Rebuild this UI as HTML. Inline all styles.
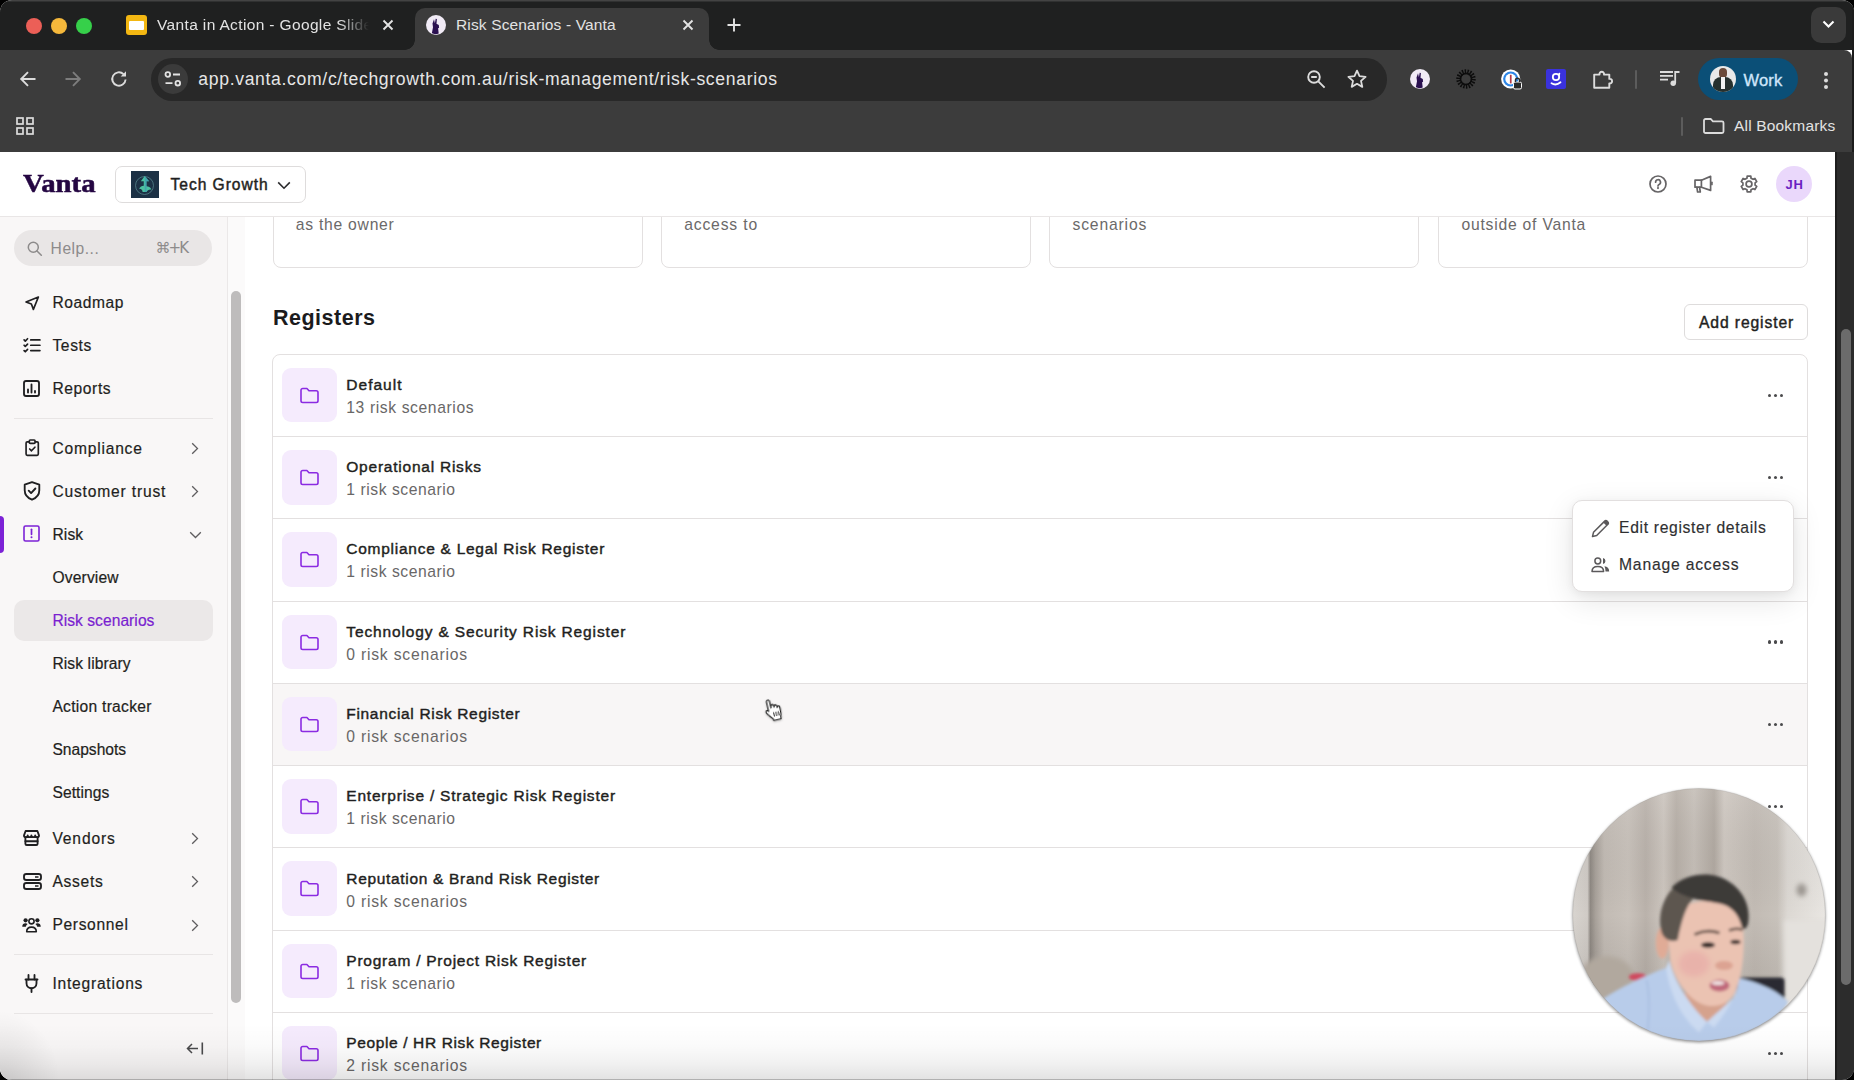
<!DOCTYPE html>
<html lang="en">
<head>
<meta charset="utf-8">
<title>Risk Scenarios - Vanta</title>
<style>
*{box-sizing:border-box;margin:0;padding:0}
html,body{width:1854px;height:1080px;overflow:hidden;background:#000}
body{font-family:"Liberation Sans",sans-serif;position:relative;color:#1c1c1e}
.abs{position:absolute}
.t{position:absolute;white-space:nowrap;line-height:1}
svg{position:absolute;overflow:visible}
/* ---------- browser chrome ---------- */
#win{position:absolute;left:0;top:0;width:1854px;height:1080px;border-radius:12px 12px 12px 12px;overflow:hidden;background:#fff}
#tabstrip{position:absolute;left:0;top:0;width:1854px;height:50px;background:#1f2020;box-shadow:inset 0 1.500px 0 rgba(255,255,255,.16)}
#toolbar{position:absolute;left:0;top:50px;width:1852px;height:102px;background:#3c3c3c;border-top-right-radius:8px}
#redge{position:absolute;left:1852px;top:0;width:2px;height:1080px;background:#1c1c1c}
#acttab{position:absolute;left:415px;top:8px;width:294px;height:42px;background:#3c3c3c;border-radius:10px 10px 0 0}
#acttab:before,#acttab:after{content:"";position:absolute;bottom:0;width:10px;height:10px}
#acttab:before{left:-10px;background:radial-gradient(circle at 0 0,rgba(0,0,0,0) 9.5px,#3c3c3c 10px)}
#acttab:after{right:-10px;background:radial-gradient(circle at 100% 0,rgba(0,0,0,0) 9.5px,#3c3c3c 10px)}
.tl{position:absolute;top:18px;width:16px;height:16px;border-radius:50%}
.tabtxt{font-size:15.5px;color:#e3e3e3;top:17px;letter-spacing:.15px}
#omni{position:absolute;left:151px;top:58px;width:1236px;height:42.500px;border-radius:21.250px;background:#282828}
#url{left:198.300px;top:70.500px;font-size:17.600px;color:#e6e6e6;letter-spacing:.665px}
/* ---------- page ---------- */
#page{position:absolute;left:0;top:152px;width:1835px;height:928px;background:#fff;overflow:hidden}
#vscroll{position:absolute;left:1835px;top:152px;width:19px;height:928px;background:#2c2c2c;border-left:2px solid #1d1d1d}
#vthumb{position:absolute;left:4px;top:177px;width:10px;height:656px;border-radius:5px;background:#6b6b6b}
</style>
</head>
<body>
<div id="win">
<!-- CHROME -->
<div id="tabstrip">
  <div class="tl" style="left:26px;background:#ec5f57"></div>
  <div class="tl" style="left:51px;background:#f5b83b"></div>
  <div class="tl" style="left:76px;background:#36d04a"></div>
  <div id="acttab"></div>
</div>
<div id="redge"></div>
<div id="toolbar"></div>
<div id="omni"></div>
<div class="t tabtxt" style="left:157px;width:212px;overflow:hidden;letter-spacing:.36px;-webkit-mask-image:linear-gradient(90deg,#000 86%,rgba(0,0,0,0) 100%);mask-image:linear-gradient(90deg,#000 86%,rgba(0,0,0,0) 100%)">Vanta in Action - Google Slides</div>
<div class="t tabtxt" style="left:456px">Risk Scenarios - Vanta</div>
<div class="t" id="url">app.vanta.com/c/techgrowth.com.au/risk-management/risk-scenarios</div>

<!-- slides favicon -->
<div class="abs" style="left:126px;top:15px;width:21px;height:20px;border-radius:3px;background:#f3b712"></div>
<div class="abs" style="left:129px;top:21px;width:15px;height:9px;border-radius:1px;background:#fff"></div>
<!-- tab close x -->
<svg style="left:381px;top:18px" width="14" height="14" viewBox="0 0 14 14"><path d="M2.5 2.5l9 9M11.5 2.5l-9 9" stroke="#e3e3e3" stroke-width="1.9" fill="none"/></svg>
<svg style="left:681px;top:18px" width="14" height="14" viewBox="0 0 14 14"><path d="M2.5 2.5l9 9M11.5 2.5l-9 9" stroke="#e3e3e3" stroke-width="1.9" fill="none"/></svg>
<!-- vanta favicon -->
<div class="abs" style="left:426px;top:15px;width:20px;height:20px;border-radius:50%;background:#f1ebf6"></div>
<svg style="left:426px;top:15px" width="20" height="20" viewBox="0 0 20 20"><path d="M8 4.2l.9 4 .8-4.4 1.2.3-.4 4.6 2.3 1.4.3 2.6-1 .6.6 5.2c-2.300 1.1-5.400 .7-6.800-.5l1.100-5.800-.5-3.600z" fill="#2a1050"/></svg>
<!-- new tab + -->
<svg style="left:726px;top:17px" width="16" height="16" viewBox="0 0 16 16"><path d="M8 1.500v13M1.500 8h13" stroke="#e3e3e3" stroke-width="1.900" fill="none"/></svg>
<!-- tab search -->
<div class="abs" style="left:1811px;top:7px;width:35px;height:36px;border-radius:10px;background:#3a3a3a"></div>
<svg style="left:1821px;top:19px" width="15" height="11" viewBox="0 0 15 11"><path d="M2.500 2.500l5 5 5-5" stroke="#fff" stroke-width="2.100" fill="none"/></svg>
<!-- back / fwd / reload -->
<svg style="left:19px;top:70px" width="18" height="18" viewBox="0 0 18 18"><path d="M16.500 9H3M9 2.200L2.200 9 9 15.800" stroke="#dcdcdc" stroke-width="1.900" fill="none" stroke-linejoin="miter"/></svg>
<svg style="left:64px;top:70px" width="18" height="18" viewBox="0 0 18 18"><path d="M1.500 9H15M9 2.200L15.800 9 9 15.800" stroke="#7d7d7d" stroke-width="1.900" fill="none"/></svg>
<svg style="left:109px;top:69px" width="20" height="20" viewBox="0 0 20 20"><path d="M16.600 10.500a6.700 6.700 0 1 1-2.100-5.400" stroke="#dcdcdc" stroke-width="1.900" fill="none"/><path d="M17 2.300v5.300h-5.300z" fill="#dcdcdc"/></svg>
<!-- site settings -->
<div class="abs" style="left:158px;top:64px;width:30px;height:30px;border-radius:50%;background:#3b3b3b"></div>
<svg style="left:163px;top:70px" width="20" height="18" viewBox="0 0 20 18"><g stroke="#e3e3e3" stroke-width="1.800" fill="none"><circle cx="4.800" cy="4.500" r="2.300"/><path d="M10 4.500h7"/><circle cx="14.800" cy="13.200" r="2.300"/><path d="M2.500 13.200h7"/></g></svg>
<!-- zoom + star -->
<svg style="left:1306px;top:69px" width="21" height="21" viewBox="0 0 21 21"><g stroke="#dcdcdc" stroke-width="1.900" fill="none"><circle cx="8" cy="8" r="5.800"/><path d="M12.300 12.300l6.300 6.300M5.200 8h5.600"/></g></svg>
<svg style="left:1346px;top:68px" width="22" height="22" viewBox="0 0 22 22"><path d="M11 2.600l2.500 5.600 6.100.6-4.600 4.100 1.300 6-5.300-3.100-5.300 3.100 1.300-6-4.600-4.100 6.100-.6z" stroke="#dcdcdc" stroke-width="1.800" fill="none" stroke-linejoin="round"/></svg>
<!-- extension icons -->
<div class="abs" style="left:1410px;top:69px;width:20px;height:20px;border-radius:50%;background:#f1ebf6"></div>
<svg style="left:1410px;top:69px" width="20" height="20" viewBox="0 0 20 20"><path d="M8 4.200l.9 4 .8-4.400 1.200.3-.4 4.600 2.300 1.400.3 2.600-1 .6.600 5.200c-2.300 1.100-5.400 .7-6.800-.5l1.100-5.800-.5-3.600z" fill="#2a1050"/></svg>
<svg style="left:1456px;top:69px" width="20" height="20" viewBox="0 0 20 20"><circle cx="10" cy="10" r="7.200" fill="none" stroke="#0c0c0c" stroke-width="5" stroke-dasharray="1.300 1.200"/><circle cx="10" cy="10" r="5.600" fill="none" stroke="#0c0c0c" stroke-width="1.600"/></svg>
<svg style="left:1500px;top:68px" width="24" height="24" viewBox="0 0 24 24"><circle cx="10.700" cy="11" r="9.600" fill="#fff"/><circle cx="10.700" cy="11" r="7.600" fill="#2e86e6"/><circle cx="10.700" cy="11" r="5.400" fill="#fff"/><rect x="9.900" y="6.800" width="1.700" height="8.600" fill="#b33a4a"/><rect x="13.500" y="14" width="8" height="7" rx="1.500" fill="#2b2b2b" stroke="#fff" stroke-width="1"/><path d="M15.500 14v-1.800a2 2 0 0 1 4 0V14" fill="none" stroke="#2b2b2b" stroke-width="1.500"/></svg>
<div class="abs" style="left:1546px;top:69px;width:20px;height:20px;border-radius:2px;background:#3a32dc"></div>
<svg style="left:1546px;top:69px" width="20" height="20" viewBox="0 0 20 20"><circle cx="10" cy="8" r="3.200" fill="none" stroke="#fff" stroke-width="1.800"/><path d="M13.400 4.600l-.6 1.600M5.500 14.300c2.800 1.700 6.400 1.200 9-1" stroke="#fff" stroke-width="1.800" fill="none" stroke-linecap="round"/></svg>
<!-- puzzle -->
<svg style="left:1592px;top:68px" width="22" height="22" viewBox="0 0 22 22"><path d="M2.200 6.600h5.300a2.300 2.300 0 1 1 4.500 0h5.300v4.300a2.300 2.300 0 1 1 0 4.500V19.800H2.200z" stroke="#dcdcdc" stroke-width="1.900" fill="none" stroke-linejoin="round"/></svg>
<div class="abs" style="left:1635px;top:70px;width:2px;height:19px;background:#5c5c5c;border-radius:1px"></div>
<!-- media -->
<svg style="left:1660px;top:70px" width="20" height="17" viewBox="0 0 20 17"><g stroke="#dcdcdc" stroke-width="1.800" fill="none"><path d="M0 2h13M0 5.800h13M0 9.600h8"/><path d="M15.200 13V2h4.300"/></g><circle cx="13.200" cy="13.200" r="2.700" fill="#dcdcdc"/></svg>
<!-- profile pill -->
<div class="abs" style="left:1698px;top:58px;width:100px;height:42px;border-radius:21px;background:#0b4f77"></div>
<div class="abs" style="left:1710px;top:66px;width:26px;height:26px;border-radius:50%;background:#e9e9e9;overflow:hidden"><div class="abs" style="left:9px;top:2px;width:8px;height:10px;border-radius:4px;background:#6b4a3a"></div><div class="abs" style="left:3px;top:11px;width:20px;height:18px;border-radius:8px 8px 0 0;background:#26302e"></div><div class="abs" style="left:11px;top:11px;width:4px;height:12px;background:#f2f2f2"></div></div>
<div class="t" style="left:1743.500px;top:71.600px;font-size:16.500px;color:#cfe6fb;font-weight:400;letter-spacing:.15px;-webkit-text-stroke:.35px #cfe6fb">Work</div>
<div class="abs" style="left:1824px;top:72px;width:4px;height:4px;border-radius:50%;background:#dcdcdc;box-shadow:0 6.500px 0 #dcdcdc,0 13px 0 #dcdcdc"></div>
<!-- bookmarks bar -->
<svg style="left:16px;top:117px" width="18" height="18" viewBox="0 0 18 18"><g stroke="#dcdcdc" stroke-width="1.700" fill="none"><rect x="1" y="1" width="6" height="6"/><rect x="11" y="1" width="6" height="6"/><rect x="1" y="11" width="6" height="6"/><rect x="11" y="11" width="6" height="6"/></g></svg>
<div class="abs" style="left:1681px;top:117px;width:2px;height:19px;background:#5c5c5c;border-radius:1px"></div>
<svg style="left:1703px;top:118px" width="22" height="16" viewBox="0 0 22 16"><path d="M1 2.500a1.500 1.500 0 0 1 1.500-1.500h5.200l2.200 2.300h9.100a1.500 1.500 0 0 1 1.500 1.500v8.700a1.500 1.500 0 0 1-1.500 1.500h-16.500a1.500 1.500 0 0 1-1.500-1.500z" stroke="#dcdcdc" stroke-width="1.800" fill="none"/></svg>
<div class="t" style="left:1734px;top:118px;font-size:15.500px;color:#e3e3e3;letter-spacing:.18px">All Bookmarks</div>

<div id="page">
<!-- MAIN -->
<div class="abs" style="left:272.5px;top:30px;width:370.0px;height:85.8px;border:1px solid #e3e0e0;border-radius:8px;background:#fff"></div>
<div class="abs" style="left:661px;top:30px;width:370.0px;height:85.8px;border:1px solid #e3e0e0;border-radius:8px;background:#fff"></div>
<div class="abs" style="left:1049.3px;top:30px;width:370.0px;height:85.8px;border:1px solid #e3e0e0;border-radius:8px;background:#fff"></div>
<div class="abs" style="left:1437.8px;top:30px;width:370.2px;height:85.8px;border:1px solid #e3e0e0;border-radius:8px;background:#fff"></div>
<div class="abs" style="left:1684px;top:152px;width:124px;height:36px;border:1px solid #dedcdc;border-radius:6px;background:#fff"></div>
<div class="abs" style="left:272px;top:201.73px;width:1536px;height:760px;border:1px solid #e3e0e0;border-radius:8px 8px 0 0;background:#fff"></div>
<div class="abs" style="left:273px;top:531.81px;width:1534px;height:81.27px;background:#f8f6f6"></div>
<div class="abs" style="left:281.500px;top:215.73px;width:55px;height:54.500px;border-radius:9px;background:#f5ebfd"></div>
<svg style="left:299.500px;top:234.73px" width="19" height="17" viewBox="0 0 19 17"><path d="M1 3.200A1.700 1.700 0 0 1 2.700 1.500h4.200l2.100 2.300h7.300A1.700 1.700 0 0 1 18 5.500v8.300a1.700 1.700 0 0 1-1.700 1.700H2.700A1.700 1.700 0 0 1 1 13.800z" stroke="#8b2be2" stroke-width="1.600" fill="none" stroke-linejoin="round"/></svg>
<div class="abs" style="left:1768px;top:241.53px;width:3.400px;height:3.400px;border-radius:50%;background:#4a4a4c;box-shadow:6px 0 0 #4a4a4c,12px 0 0 #4a4a4c"></div>
<div class="abs" style="left:273px;top:284.00px;width:1534px;height:1px;background:#e3e0e0"></div>
<div class="abs" style="left:281.500px;top:298.00px;width:55px;height:54.500px;border-radius:9px;background:#f5ebfd"></div>
<svg style="left:299.500px;top:317.00px" width="19" height="17" viewBox="0 0 19 17"><path d="M1 3.200A1.700 1.700 0 0 1 2.700 1.500h4.200l2.100 2.300h7.300A1.700 1.700 0 0 1 18 5.500v8.300a1.700 1.700 0 0 1-1.700 1.700H2.700A1.700 1.700 0 0 1 1 13.800z" stroke="#8b2be2" stroke-width="1.600" fill="none" stroke-linejoin="round"/></svg>
<div class="abs" style="left:1768px;top:323.80px;width:3.400px;height:3.400px;border-radius:50%;background:#4a4a4c;box-shadow:6px 0 0 #4a4a4c,12px 0 0 #4a4a4c"></div>
<div class="abs" style="left:273px;top:366.27px;width:1534px;height:1px;background:#e3e0e0"></div>
<div class="abs" style="left:281.500px;top:380.27px;width:55px;height:54.500px;border-radius:9px;background:#f5ebfd"></div>
<svg style="left:299.500px;top:399.27px" width="19" height="17" viewBox="0 0 19 17"><path d="M1 3.200A1.700 1.700 0 0 1 2.700 1.500h4.200l2.100 2.300h7.300A1.700 1.700 0 0 1 18 5.500v8.300a1.700 1.700 0 0 1-1.700 1.700H2.700A1.700 1.700 0 0 1 1 13.800z" stroke="#8b2be2" stroke-width="1.600" fill="none" stroke-linejoin="round"/></svg>
<div class="abs" style="left:1768px;top:406.07px;width:3.400px;height:3.400px;border-radius:50%;background:#4a4a4c;box-shadow:6px 0 0 #4a4a4c,12px 0 0 #4a4a4c"></div>
<div class="abs" style="left:273px;top:448.54px;width:1534px;height:1px;background:#e3e0e0"></div>
<div class="abs" style="left:281.500px;top:462.54px;width:55px;height:54.500px;border-radius:9px;background:#f5ebfd"></div>
<svg style="left:299.500px;top:481.54px" width="19" height="17" viewBox="0 0 19 17"><path d="M1 3.200A1.700 1.700 0 0 1 2.700 1.500h4.200l2.100 2.300h7.300A1.700 1.700 0 0 1 18 5.500v8.300a1.700 1.700 0 0 1-1.700 1.700H2.700A1.700 1.700 0 0 1 1 13.800z" stroke="#8b2be2" stroke-width="1.600" fill="none" stroke-linejoin="round"/></svg>
<div class="abs" style="left:1768px;top:488.34px;width:3.400px;height:3.400px;border-radius:50%;background:#4a4a4c;box-shadow:6px 0 0 #4a4a4c,12px 0 0 #4a4a4c"></div>
<div class="abs" style="left:273px;top:530.81px;width:1534px;height:1px;background:#e3e0e0"></div>
<div class="abs" style="left:281.500px;top:544.81px;width:55px;height:54.500px;border-radius:9px;background:#f5ebfd"></div>
<svg style="left:299.500px;top:563.81px" width="19" height="17" viewBox="0 0 19 17"><path d="M1 3.200A1.700 1.700 0 0 1 2.700 1.500h4.200l2.100 2.300h7.300A1.700 1.700 0 0 1 18 5.500v8.300a1.700 1.700 0 0 1-1.700 1.700H2.700A1.700 1.700 0 0 1 1 13.800z" stroke="#8b2be2" stroke-width="1.600" fill="none" stroke-linejoin="round"/></svg>
<div class="abs" style="left:1768px;top:570.61px;width:3.400px;height:3.400px;border-radius:50%;background:#4a4a4c;box-shadow:6px 0 0 #4a4a4c,12px 0 0 #4a4a4c"></div>
<div class="abs" style="left:273px;top:613.08px;width:1534px;height:1px;background:#e3e0e0"></div>
<div class="abs" style="left:281.500px;top:627.08px;width:55px;height:54.500px;border-radius:9px;background:#f5ebfd"></div>
<svg style="left:299.500px;top:646.08px" width="19" height="17" viewBox="0 0 19 17"><path d="M1 3.200A1.700 1.700 0 0 1 2.700 1.500h4.200l2.100 2.300h7.300A1.700 1.700 0 0 1 18 5.500v8.300a1.700 1.700 0 0 1-1.700 1.700H2.700A1.700 1.700 0 0 1 1 13.800z" stroke="#8b2be2" stroke-width="1.600" fill="none" stroke-linejoin="round"/></svg>
<div class="abs" style="left:1768px;top:652.88px;width:3.400px;height:3.400px;border-radius:50%;background:#4a4a4c;box-shadow:6px 0 0 #4a4a4c,12px 0 0 #4a4a4c"></div>
<div class="abs" style="left:273px;top:695.35px;width:1534px;height:1px;background:#e3e0e0"></div>
<div class="abs" style="left:281.500px;top:709.35px;width:55px;height:54.500px;border-radius:9px;background:#f5ebfd"></div>
<svg style="left:299.500px;top:728.35px" width="19" height="17" viewBox="0 0 19 17"><path d="M1 3.200A1.700 1.700 0 0 1 2.700 1.500h4.200l2.100 2.300h7.300A1.700 1.700 0 0 1 18 5.500v8.300a1.700 1.700 0 0 1-1.700 1.700H2.700A1.700 1.700 0 0 1 1 13.800z" stroke="#8b2be2" stroke-width="1.600" fill="none" stroke-linejoin="round"/></svg>
<div class="abs" style="left:1768px;top:735.15px;width:3.400px;height:3.400px;border-radius:50%;background:#4a4a4c;box-shadow:6px 0 0 #4a4a4c,12px 0 0 #4a4a4c"></div>
<div class="abs" style="left:273px;top:777.62px;width:1534px;height:1px;background:#e3e0e0"></div>
<div class="abs" style="left:281.500px;top:791.62px;width:55px;height:54.500px;border-radius:9px;background:#f5ebfd"></div>
<svg style="left:299.500px;top:810.62px" width="19" height="17" viewBox="0 0 19 17"><path d="M1 3.200A1.700 1.700 0 0 1 2.700 1.500h4.200l2.100 2.300h7.300A1.700 1.700 0 0 1 18 5.500v8.300a1.700 1.700 0 0 1-1.700 1.700H2.700A1.700 1.700 0 0 1 1 13.800z" stroke="#8b2be2" stroke-width="1.600" fill="none" stroke-linejoin="round"/></svg>
<div class="abs" style="left:1768px;top:817.42px;width:3.400px;height:3.400px;border-radius:50%;background:#4a4a4c;box-shadow:6px 0 0 #4a4a4c,12px 0 0 #4a4a4c"></div>
<div class="abs" style="left:273px;top:859.89px;width:1534px;height:1px;background:#e3e0e0"></div>
<div class="abs" style="left:281.500px;top:873.89px;width:55px;height:54.500px;border-radius:9px;background:#f5ebfd"></div>
<svg style="left:299.500px;top:892.89px" width="19" height="17" viewBox="0 0 19 17"><path d="M1 3.200A1.700 1.700 0 0 1 2.700 1.500h4.200l2.100 2.300h7.300A1.700 1.700 0 0 1 18 5.500v8.300a1.700 1.700 0 0 1-1.700 1.700H2.700A1.700 1.700 0 0 1 1 13.800z" stroke="#8b2be2" stroke-width="1.600" fill="none" stroke-linejoin="round"/></svg>
<div class="abs" style="left:1768px;top:899.69px;width:3.400px;height:3.400px;border-radius:50%;background:#4a4a4c;box-shadow:6px 0 0 #4a4a4c,12px 0 0 #4a4a4c"></div>
<!-- SIDEBAR -->
<div class="abs" style="left:0;top:65px;width:228px;height:863px;background:#f9f7f7;border-right:1px solid #ebe8e8"></div>
<div class="abs" style="left:228px;top:65px;width:16.500px;height:863px;background:#fbfafa"></div>
<div class="abs" style="left:231.300px;top:138.800px;width:10px;height:712px;border-radius:5px;background:#bebcbc"></div>
<div class="abs" style="left:14px;top:78px;width:198px;height:36px;border-radius:18px;background:#e9e6e6"></div>
<svg style="left:27px;top:88.500px" width="16" height="16" viewBox="0 0 16 16"><circle cx="6.300" cy="6.300" r="5" stroke="#8d8b8b" stroke-width="1.500" fill="none"/><path d="M10 10l4.300 4.300" stroke="#8d8b8b" stroke-width="1.500" stroke-linecap="round"/></svg>
<div class="abs" style="left:14px;top:265.800px;width:198.500px;height:1px;background:#e8e5e5"></div>
<div class="abs" style="left:14px;top:801.800px;width:198.500px;height:1px;background:#e8e5e5"></div>
<div class="abs" style="left:14px;top:860.800px;width:198.500px;height:1px;background:#e8e5e5"></div>
<div class="abs" style="left:0;top:364px;width:4px;height:36.500px;border-radius:0 4px 4px 0;background:#7c22d6"></div>
<div class="abs" style="left:14px;top:448px;width:198.500px;height:40.500px;border-radius:10px;background:#ebe8e8"></div>
<!-- sidebar icons: (screen y - 152) -->
<svg style="left:23.800px;top:142.800px" width="16.400" height="16.400" viewBox="0 0 18 18"><path d="M15.800 2.200L2.200 7.700l5.900 2.200 2.200 5.900z" stroke="#1f1f21" stroke-width="1.850" fill="none" stroke-linejoin="round"/></svg>
<svg style="left:23px;top:184.800px" width="18.300" height="16.500" viewBox="0 0 20 18"><g stroke="#1f1f21" stroke-width="1.850" fill="none" stroke-linecap="round" stroke-linejoin="round"><path d="M8.500 3.200h10M8.500 9h10M8.500 14.800h10"/><path d="M1.200 3.200l1.300 1.300 2.500-2.600M1.200 9l1.300 1.300 2.500-2.600M1.200 14.800l1.300 1.300 2.500-2.600"/></g></svg>
<svg style="left:23px;top:228px" width="17" height="17" viewBox="0 0 17 17"><rect x="1" y="1" width="15" height="15" rx="2" stroke="#1f1f21" stroke-width="1.850" fill="none"/><path d="M5 12.500v-3M8.500 12.500v-8M12 12.500v-1.600" stroke="#1f1f21" stroke-width="1.850" stroke-linecap="round"/></svg>
<svg style="left:24.500px;top:287.300px" width="14.400" height="17.300" viewBox="0 0 16 19"><g stroke="#1f1f21" stroke-width="1.850" fill="none" stroke-linejoin="round" stroke-linecap="round"><path d="M4.500 3H2.500a1.300 1.300 0 0 0-1.300 1.300v12.400A1.300 1.300 0 0 0 2.500 18h11a1.300 1.300 0 0 0 1.300-1.300V4.300A1.300 1.300 0 0 0 13.500 3h-2"/><rect x="4.800" y="1" width="6.400" height="3.700" rx="1"/><path d="M5.200 11l2 2 3.800-4"/></g></svg>
<svg style="left:22.500px;top:329px" width="18" height="20" viewBox="0 0 18 20"><g stroke="#1f1f21" stroke-width="1.850" fill="none" stroke-linejoin="round" stroke-linecap="round"><path d="M9 1.200l7.300 2.500v5.500c0 4.500-3 7.800-7.300 9.500C4.700 17 1.700 13.700 1.700 9.200V3.700z"/><path d="M5.700 9.700l2.400 2.400 4.300-4.600"/></g></svg>
<svg style="left:23px;top:372.500px" width="17" height="17" viewBox="0 0 17 17"><rect x="1" y="1" width="15" height="15" rx="1.500" stroke="#7c22d6" stroke-width="1.600" fill="none"/><path d="M8.500 4.300v5" stroke="#7c22d6" stroke-width="1.700" stroke-linecap="round"/><circle cx="8.500" cy="12.300" r="1" fill="#7c22d6"/></svg>
<svg style="left:23px;top:678.300px" width="17" height="16" viewBox="0 0 17 16"><g stroke="#1f1f21" stroke-width="1.850" fill="none" stroke-linejoin="round" stroke-linecap="round"><path d="M2.600 1h11.800l1.600 4.400c0 1-.9 1.700-1.900 1.700s-1.900-.7-1.900-1.700c0 1-.9 1.700-1.900 1.700S8.400 6.400 8.400 5.400c0 1-.8 1.700-1.800 1.700s-1.900-.7-1.900-1.700c0 1-.9 1.700-1.900 1.700S1 6.400 1 5.400z"/><path d="M2.400 7.300v6.400c0 .7.500 1.300 1.300 1.300h9.600c.8 0 1.300-.6 1.300-1.300V7.300"/><path d="M2.400 11.200h12.200"/></g></svg>
<svg style="left:22.500px;top:720.500px" width="19" height="17" viewBox="0 0 19 17"><g stroke="#1f1f21" stroke-width="1.850" fill="none"><rect x="1" y="1" width="17" height="6" rx="2.300"/><rect x="1" y="10" width="17" height="6" rx="2.300"/></g><path d="M12 4h3.500M12 13h3.500" stroke="#1f1f21" stroke-width="1.300"/></svg>
<svg style="left:22px;top:764.500px" width="19" height="16" viewBox="0 0 19 16"><g fill="#1f1f21"><circle cx="3.600" cy="3.300" r="2.100"/><circle cx="15.400" cy="3.300" r="2.100"/><path d="M.3 9.200c0-1.900 1.300-3 3.100-3 .9 0 1.600.2 2.200.7-1 .8-1.600 1.700-1.800 2.900H.3zM18.700 9.200c0-1.900-1.300-3-3.100-3-.9 0-1.600.2-2.200.7 1 .8 1.600 1.700 1.800 2.900h3.500z"/></g><circle cx="9.500" cy="4.300" r="2.600" stroke="#1f1f21" stroke-width="1.600" fill="none"/><path d="M4.700 14.800c0-3 2-4.700 4.800-4.700s4.800 1.700 4.800 4.700z" stroke="#1f1f21" stroke-width="1.600" fill="none" stroke-linejoin="round"/></svg>
<svg style="left:24px;top:822px" width="15" height="19" viewBox="0 0 15 19"><g stroke="#1f1f21" stroke-width="1.850" fill="none" stroke-linecap="round" stroke-linejoin="round"><path d="M4.500 1v4.500M10.500 1v4.500"/><path d="M1.500 5.500h12"/><path d="M2.500 5.700v3.500a5 5 0 0 0 10 0V5.700"/><path d="M7.500 14.300V18"/></g></svg>
<!-- chevrons -->
<svg style="left:191px;top:290px" width="8" height="13" viewBox="0 0 8 13"><path d="M1.200 1.200l5.300 5.300-5.300 5.300" stroke="#5f5d5f" stroke-width="1.300" fill="none"/></svg>
<svg style="left:191px;top:333px" width="8" height="13" viewBox="0 0 8 13"><path d="M1.200 1.200l5.300 5.300-5.300 5.300" stroke="#5f5d5f" stroke-width="1.300" fill="none"/></svg>
<svg style="left:189px;top:379px" width="13" height="8" viewBox="0 0 13 8"><path d="M1.200 1.200l5.300 5.300 5.300-5.300" stroke="#5f5d5f" stroke-width="1.300" fill="none"/></svg>
<svg style="left:191px;top:680px" width="8" height="13" viewBox="0 0 8 13"><path d="M1.200 1.200l5.300 5.300-5.300 5.300" stroke="#5f5d5f" stroke-width="1.300" fill="none"/></svg>
<svg style="left:191px;top:723px" width="8" height="13" viewBox="0 0 8 13"><path d="M1.200 1.200l5.300 5.300-5.300 5.300" stroke="#5f5d5f" stroke-width="1.300" fill="none"/></svg>
<svg style="left:191px;top:766.500px" width="8" height="13" viewBox="0 0 8 13"><path d="M1.200 1.200l5.300 5.300-5.300 5.300" stroke="#5f5d5f" stroke-width="1.300" fill="none"/></svg>
<!-- collapse -->
<svg style="left:186px;top:889.500px" width="18" height="13" viewBox="0 0 18 13"><g stroke="#4a4a4c" stroke-width="1.500" fill="none"><path d="M12 6.500H1.500M6 2L1.500 6.500 6 11"/><path d="M16.300 .5v12" stroke-width="1.600"/></g></svg>
<!-- HEADER -->
<div class="abs" style="left:0;top:0;width:1835px;height:64.500px;background:#fff;border-bottom:1px solid #e9e6e6"></div>
<div class="abs" style="left:115px;top:14px;width:191px;height:36.500px;border:1px solid #dedcdc;border-radius:7px;background:#fff"></div>
<div class="abs" style="left:131px;top:18.500px;width:27.500px;height:27.500px;background:#1c3145;overflow:hidden">
  <div class="abs" style="left:4px;top:5px;width:19px;height:19px;border-radius:50%;border:1px solid #5b8b93;opacity:.7"></div>
  <svg style="left:0;top:0" width="27.500" height="27.500" viewBox="0 0 28 28"><path d="M14 5l4.500 5.500h-2.700v5c2 0 4 1 5 3.500-2.500-.5-4 .5-5 2.500h-4c0-2-1-3.500-3.500-3.500 1-2 2.500-3 4.700-3v-4.500h-3z" fill="#4cc0a0"/><path d="M14 5l4.500 5.500h-2.700v11h-1.800z" fill="#3a93b8" opacity=".6"/></svg>
</div>
<svg style="left:277px;top:28.500px" width="14" height="9" viewBox="0 0 14 9"><path d="M1.200 1.400l5.800 5.800 5.800-5.800" stroke="#2a2a2c" stroke-width="1.600" fill="none"/></svg>
<!-- header right icons -->
<svg style="left:1649px;top:23px" width="18" height="18" viewBox="0 0 18 18"><circle cx="9" cy="9" r="8" stroke="#666466" stroke-width="1.700" fill="none"/><path d="M6.600 7.200a2.450 2.450 0 1 1 3.500 2.200c-.75.400-1.100.800-1.100 1.500" stroke="#666466" stroke-width="1.700" fill="none" stroke-linecap="round"/><circle cx="9" cy="13.100" r="1.050" fill="#666466"/></svg>
<svg style="left:1694px;top:23px" width="19" height="18" viewBox="0 0 19 18"><g stroke="#666466" stroke-width="1.700" fill="none" stroke-linejoin="round" stroke-linecap="round"><path d="M1 5.200h6.400L16.600 1.400v14L7.400 12.200H1z"/><path d="M7.400 5.200v7"/><path d="M2.900 12.400l.7 4.600h2.700l-.7-4.600"/><path d="M17.900 7.300v2.200"/></g></svg>
<svg style="left:1739.700px;top:23.200px" width="18" height="18" viewBox="0 0 18 18"><path d="M7.18 1.11L10.82 1.11L11.02 3.14L13.07 4.32L14.92 3.48L16.75 6.63L15.09 7.82L15.09 10.18L16.75 11.37L14.92 14.52L13.07 13.68L11.02 14.86L10.82 16.89L7.18 16.89L6.98 14.86L4.93 13.68L3.08 14.52L1.25 11.37L2.91 10.18L2.91 7.82L1.25 6.63L3.08 3.48L4.93 4.32L6.98 3.14Z" stroke="#666466" stroke-width="1.700" fill="none" stroke-linejoin="round"/><circle cx="9" cy="9" r="2.900" stroke="#666466" stroke-width="1.700" fill="none"/></svg>
<div class="abs" style="left:1776px;top:14px;width:36.300px;height:36.300px;border-radius:50%;background:#ead8fb"></div>
<!-- OVERLAYS (page coords) -->
<div class="abs" style="left:1572.300px;top:348.300px;width:221.500px;height:92px;border:1px solid #e2dfdf;border-radius:10px;background:#fff;box-shadow:0 8px 30px rgba(0,0,0,.11),0 2px 8px rgba(0,0,0,.05)"></div>
<svg style="left:1591px;top:366.500px" width="19" height="19" viewBox="0 0 19 19"><g stroke="#5b595b" stroke-width="1.500" fill="none" stroke-linejoin="round"><path d="M1.500 17.500l1-4.200L13.700 2.100a1.600 1.600 0 0 1 2.300 0l.9.900a1.600 1.600 0 0 1 0 2.300L5.700 16.500z"/></g><path d="M12.300 3.500l3.200 3.200 1.500-1.500a1.500 1.500 0 0 0 0-2.200l-1-1a1.500 1.500 0 0 0-2.200 0z" fill="#5b595b"/></svg>
<svg style="left:1591px;top:404.500px" width="19" height="16" viewBox="0 0 19 16"><g stroke="#5b595b" stroke-width="1.500" fill="none"><circle cx="6.800" cy="4" r="2.900"/><path d="M1 14.500c0-3.200 2.300-5 5.800-5s5.800 1.800 5.800 5z" stroke-linejoin="round"/></g><path d="M12 1.100a3 3 0 0 1 0 5.900zM13.500 9.300c2.800.3 4.700 2 4.700 5.300h-3.700c0-2-.3-3.800-1-5.300z" fill="#5b595b"/></svg>

<!-- texts -->
<div class="t" style="left:23.30px;top:19.21px;font-size:25.5px;color:#240642;font-weight:700;font-family:'Liberation Serif',serif;transform:scaleX(1.1300);transform-origin:0 0;-webkit-text-stroke:0.5px #240642">Vanta</div>
<div class="t" style="left:170.60px;top:25.09px;font-size:15.6px;color:#1f1f21;letter-spacing:0.945px;-webkit-text-stroke:0.45px #1f1f21">Tech Growth</div>
<div class="t" style="left:1785.60px;top:25.80px;font-size:13px;color:#6a1fc2;font-weight:700;letter-spacing:0.775px">JH</div>
<div class="t" style="left:50.60px;top:89.49px;font-size:15.6px;color:#8d8b8b;letter-spacing:0.520px">Help...</div>
<div class="t" style="left:155.40px;top:88.90px;font-size:15px;color:#8d8b8b;font-family:'DejaVu Sans','Liberation Sans',sans-serif;letter-spacing:-1.903px">⌘+K</div>
<div class="t" style="left:52.40px;top:142.79px;font-size:15.6px;color:#1f1f21;letter-spacing:0.562px;-webkit-text-stroke:0.2px #1f1f21">Roadmap</div>
<div class="t" style="left:52.40px;top:185.99px;font-size:15.6px;color:#1f1f21;letter-spacing:0.648px;-webkit-text-stroke:0.2px #1f1f21">Tests</div>
<div class="t" style="left:52.40px;top:229.19px;font-size:15.6px;color:#1f1f21;letter-spacing:0.607px;-webkit-text-stroke:0.2px #1f1f21">Reports</div>
<div class="t" style="left:52.40px;top:288.69px;font-size:15.6px;color:#1f1f21;letter-spacing:0.795px;-webkit-text-stroke:0.2px #1f1f21">Compliance</div>
<div class="t" style="left:52.40px;top:331.69px;font-size:15.6px;color:#1f1f21;letter-spacing:0.826px;-webkit-text-stroke:0.2px #1f1f21">Customer trust</div>
<div class="t" style="left:52.40px;top:374.69px;font-size:15.6px;color:#1f1f21;letter-spacing:0.141px;-webkit-text-stroke:0.2px #1f1f21">Risk</div>
<div class="t" style="left:52.40px;top:417.99px;font-size:15.6px;color:#1f1f21;letter-spacing:0.179px;-webkit-text-stroke:0.2px #1f1f21">Overview</div>
<div class="t" style="left:52.40px;top:460.99px;font-size:15.6px;color:#7a1fd0;letter-spacing:0.047px;-webkit-text-stroke:0.2px #7a1fd0">Risk scenarios</div>
<div class="t" style="left:52.40px;top:504.19px;font-size:15.6px;color:#1f1f21;letter-spacing:0.104px;-webkit-text-stroke:0.2px #1f1f21">Risk library</div>
<div class="t" style="left:52.40px;top:547.19px;font-size:15.6px;color:#1f1f21;letter-spacing:0.281px;-webkit-text-stroke:0.2px #1f1f21">Action tracker</div>
<div class="t" style="left:52.40px;top:590.29px;font-size:15.6px;color:#1f1f21;letter-spacing:0.006px;-webkit-text-stroke:0.2px #1f1f21">Snapshots</div>
<div class="t" style="left:52.40px;top:633.39px;font-size:15.6px;color:#1f1f21;letter-spacing:0.092px;-webkit-text-stroke:0.2px #1f1f21">Settings</div>
<div class="t" style="left:52.40px;top:679.09px;font-size:15.6px;color:#1f1f21;letter-spacing:0.878px;-webkit-text-stroke:0.2px #1f1f21">Vendors</div>
<div class="t" style="left:52.40px;top:721.79px;font-size:15.6px;color:#1f1f21;letter-spacing:0.741px;-webkit-text-stroke:0.2px #1f1f21">Assets</div>
<div class="t" style="left:52.40px;top:764.89px;font-size:15.6px;color:#1f1f21;letter-spacing:0.660px;-webkit-text-stroke:0.2px #1f1f21">Personnel</div>
<div class="t" style="left:52.40px;top:824.09px;font-size:15.6px;color:#1f1f21;letter-spacing:0.773px;-webkit-text-stroke:0.2px #1f1f21">Integrations</div>
<div class="t" style="left:295.80px;top:64.51px;font-size:15.7px;color:#6b6969;letter-spacing:0.743px">as the owner</div>
<div class="t" style="left:684.20px;top:64.51px;font-size:15.7px;color:#6b6969;letter-spacing:0.840px">access to</div>
<div class="t" style="left:1072.50px;top:64.51px;font-size:15.7px;color:#6b6969;letter-spacing:0.832px">scenarios</div>
<div class="t" style="left:1461.50px;top:64.51px;font-size:15.7px;color:#6b6969;letter-spacing:0.772px">outside of Vanta</div>
<div class="t" style="left:273.00px;top:156.00px;font-size:21.5px;color:#1b1b1d;font-weight:700;letter-spacing:0.500px">Registers</div>
<div class="t" style="left:1699.00px;top:162.51px;font-size:15.7px;color:#1f1f21;letter-spacing:0.882px;-webkit-text-stroke:0.42px #1f1f21">Add register</div>
<div class="t" style="left:346.30px;top:225.00px;font-size:15.5px;color:#1f1f21;letter-spacing:1.013px;-webkit-text-stroke:0.42px #1f1f21">Default</div>
<div class="t" style="left:346.30px;top:248.00px;font-size:15.7px;color:#696767;letter-spacing:0.600px">13 risk scenarios</div>
<div class="t" style="left:346.30px;top:307.00px;font-size:15.5px;color:#1f1f21;letter-spacing:0.767px;-webkit-text-stroke:0.42px #1f1f21">Operational Risks</div>
<div class="t" style="left:346.30px;top:330.00px;font-size:15.7px;color:#696767;letter-spacing:0.540px">1 risk scenario</div>
<div class="t" style="left:346.30px;top:389.00px;font-size:15.5px;color:#1f1f21;letter-spacing:0.736px;-webkit-text-stroke:0.42px #1f1f21">Compliance &amp; Legal Risk Register</div>
<div class="t" style="left:346.30px;top:412.00px;font-size:15.7px;color:#696767;letter-spacing:0.540px">1 risk scenario</div>
<div class="t" style="left:346.30px;top:472.00px;font-size:15.5px;color:#1f1f21;letter-spacing:0.858px;-webkit-text-stroke:0.42px #1f1f21">Technology &amp; Security Risk Register</div>
<div class="t" style="left:346.30px;top:495.00px;font-size:15.7px;color:#696767;letter-spacing:0.788px">0 risk scenarios</div>
<div class="t" style="left:346.30px;top:554.00px;font-size:15.5px;color:#1f1f21;letter-spacing:0.677px;-webkit-text-stroke:0.42px #1f1f21">Financial Risk Register</div>
<div class="t" style="left:346.30px;top:577.00px;font-size:15.7px;color:#696767;letter-spacing:0.788px">0 risk scenarios</div>
<div class="t" style="left:346.30px;top:636.00px;font-size:15.5px;color:#1f1f21;letter-spacing:0.788px;-webkit-text-stroke:0.42px #1f1f21">Enterprise / Strategic Risk Register</div>
<div class="t" style="left:346.30px;top:659.00px;font-size:15.7px;color:#696767;letter-spacing:0.540px">1 risk scenario</div>
<div class="t" style="left:346.30px;top:719.00px;font-size:15.5px;color:#1f1f21;letter-spacing:0.682px;-webkit-text-stroke:0.42px #1f1f21">Reputation &amp; Brand Risk Register</div>
<div class="t" style="left:346.30px;top:742.00px;font-size:15.7px;color:#696767;letter-spacing:0.788px">0 risk scenarios</div>
<div class="t" style="left:346.30px;top:801.00px;font-size:15.5px;color:#1f1f21;letter-spacing:0.761px;-webkit-text-stroke:0.42px #1f1f21">Program / Project Risk Register</div>
<div class="t" style="left:346.30px;top:824.00px;font-size:15.7px;color:#696767;letter-spacing:0.540px">1 risk scenario</div>
<div class="t" style="left:346.30px;top:883.00px;font-size:15.5px;color:#1f1f21;letter-spacing:0.623px;-webkit-text-stroke:0.42px #1f1f21">People / HR Risk Register</div>
<div class="t" style="left:346.30px;top:906.00px;font-size:15.7px;color:#696767;letter-spacing:0.788px">2 risk scenarios</div>
<div class="t" style="left:1619.00px;top:368.11px;font-size:15.7px;color:#2f2f31;letter-spacing:0.670px;-webkit-text-stroke:0.15px #2f2f31">Edit register details</div>
<div class="t" style="left:1619.00px;top:404.51px;font-size:15.7px;color:#2f2f31;letter-spacing:0.802px;-webkit-text-stroke:0.15px #2f2f31">Manage access</div>
</div>
<div id="vscroll"><div id="vthumb"></div></div>
<svg id="cam" style="left:1564px;top:780px" width="270" height="270" viewBox="0 0 1080 1080">
<defs>
<clipPath id="cc"><circle cx="540" cy="539" r="505"/></clipPath>
<linearGradient id="curt" gradientUnits="userSpaceOnUse" x1="35" y1="0" x2="1045" y2="0">
<stop offset="0" stop-color="#d8d4cf"/><stop offset=".058" stop-color="#d0cbc6"/><stop offset=".07" stop-color="#8f8983"/><stop offset=".09" stop-color="#a8a19a"/>
<stop offset=".125" stop-color="#c2bbb4"/><stop offset=".22" stop-color="#c9c2bb"/><stop offset=".29" stop-color="#bab2ab"/><stop offset=".36" stop-color="#cdc6bf"/>
<stop offset=".41" stop-color="#b7afa7"/><stop offset=".48" stop-color="#c6bfb8"/><stop offset=".56" stop-color="#b1a9a1"/><stop offset=".6" stop-color="#cfc8c1"/>
<stop offset=".72" stop-color="#c2bbb4"/><stop offset=".81" stop-color="#c8c2bb"/><stop offset=".85" stop-color="#dcd8d3"/><stop offset="1" stop-color="#e9e6e2"/>
</linearGradient>
<linearGradient id="vsh" x1="0" y1="0" x2="0" y2="1"><stop offset="0" stop-color="#fff" stop-opacity=".12"/><stop offset=".5" stop-color="#000" stop-opacity="0"/><stop offset="1" stop-color="#3c2f25" stop-opacity=".16"/></linearGradient>
<filter id="b3" x="-20%" y="-20%" width="140%" height="140%"><feGaussianBlur stdDeviation="5.500"/></filter>
<filter id="b10" x="-30%" y="-30%" width="160%" height="160%"><feGaussianBlur stdDeviation="11"/></filter>
</defs>
<circle cx="540" cy="544" r="506" fill="#000" opacity=".4" filter="url(#b3)"/>
<g clip-path="url(#cc)">
<rect x="0" y="0" width="1080" height="1080" fill="url(#curt)"/>
<rect x="0" y="0" width="1080" height="1080" fill="url(#vsh)"/>
<g filter="url(#b10)">
<ellipse cx="170" cy="800" rx="115" ry="95" fill="#b1a89e"/>
<ellipse cx="950" cy="440" rx="20" ry="26" fill="#9b9691"/>
<rect x="880" y="560" width="200" height="420" fill="#e4e1dd"/>
</g>
<g filter="url(#b3)">
<ellipse cx="295" cy="788" rx="36" ry="15" fill="#cf4a5e"/>
<rect x="690" y="790" width="192" height="90" rx="16" fill="#2c2c30"/>
<path d="M470 850L650 880L650 1000L470 1000Z" fill="#d5a28d"/>
<path d="M150 880C220 830 330 780 408 752L420 722C440 800 500 900 572 968C620 925 660 890 688 862L700 792C780 810 850 840 897 887C860 965 700 1050 540 1050C380 1050 220 985 150 880Z" fill="#b8ccea"/>
<path d="M408 752L420 722C440 800 500 900 572 968L540 1010C480 960 425 870 408 752Z" fill="#cbdaf1"/>
<path d="M688 862L700 800C690 870 640 940 600 990L572 968C620 925 660 890 688 862Z" fill="#cbdaf1"/>
<path d="M330 800C345 860 340 940 335 1000" stroke="#a3b9dc" stroke-width="5" fill="none"/>
<ellipse cx="393" cy="652" rx="26" ry="62" fill="#e0ab96"/>
<path d="M415 600C420 540 470 490 560 485C650 480 715 520 717 600C722 680 716 760 692 830C670 892 620 912 570 902C500 886 440 800 425 720Z" fill="#ebc3b2"/>
<path d="M388 600C375 540 395 470 440 430L520 470C490 500 470 560 455 640C430 650 395 640 388 600Z" fill="#5d5650"/>
<path d="M430 430C490 368 600 362 662 408C712 440 748 500 737 572C732 594 720 602 712 590C700 540 672 504 622 494C570 484 530 480 505 470C480 462 450 450 430 430Z" fill="#3d3b38"/>
<ellipse cx="520" cy="735" rx="62" ry="52" fill="#e6a3a4" opacity=".5" filter="url(#b10)"/>
<ellipse cx="640" cy="742" rx="36" ry="18" fill="#d69685" opacity=".7"/>
<path d="M522 618Q572 594 622 612" stroke="#5a4840" stroke-width="11" fill="none"/>
<path d="M660 602Q690 590 714 600" stroke="#5a4840" stroke-width="10" fill="none"/>
<ellipse cx="576" cy="660" rx="28" ry="11" fill="#2a2320"/>
<ellipse cx="686" cy="648" rx="20" ry="9" fill="#2a2320"/>
<ellipse cx="622" cy="822" rx="40" ry="24" fill="#c0687a"/>
<ellipse cx="616" cy="812" rx="26" ry="8" fill="#f0e2e2"/>
</g>
</g>
<circle cx="540" cy="539" r="505" fill="none" stroke="#8d8781" stroke-opacity=".4" stroke-width="2"/>
</svg>
<svg style="left:763px;top:697.400px;transform:rotate(-13deg) scale(.95);filter:drop-shadow(0 1px 1px rgba(0,0,0,.25))" width="20" height="26" viewBox="0 0 20 26"><path d="M5.200 13.500V3.200a1.600 1.600 0 0 1 3.200 0v7.300l.3-1.900a1.500 1.500 0 0 1 3 .2v1.500l.3-.8a1.400 1.400 0 0 1 2.800.5v1.400l.3-.5a1.300 1.300 0 0 1 2.500.6c0 4 .3 6.300-1 9.400l-.4 3.100H8.500l-.6-2.200c-1.700-1.800-3.400-3.800-5.400-7.400a1.500 1.500 0 0 1 2.700-1.400z" fill="#fff" stroke="#1a1a1a" stroke-width="1.200" stroke-linejoin="round"/><path d="M10 15.500v4.500M12.500 15.500v4.500M15 15.500v4.500" stroke="#1a1a1a" stroke-width="1"/></svg>
<div class="abs" style="left:0;top:1024px;width:1835px;height:56px;background:linear-gradient(180deg,rgba(0,0,0,0) 0%,rgba(0,0,0,.02) 40%,rgba(0,0,0,.06) 72%,rgba(0,0,0,.115) 100%);pointer-events:none"></div>
<div class="abs" style="left:0;top:1078.500px;width:1835px;height:1.500px;background:rgba(0,0,0,.22)"></div>
<div class="abs" style="left:0;top:1010px;width:60px;height:70px;background:radial-gradient(ellipse at 0 100%,rgba(0,0,0,.10) 0%,rgba(0,0,0,0) 70%)"></div>
</div>
</body>
</html>
